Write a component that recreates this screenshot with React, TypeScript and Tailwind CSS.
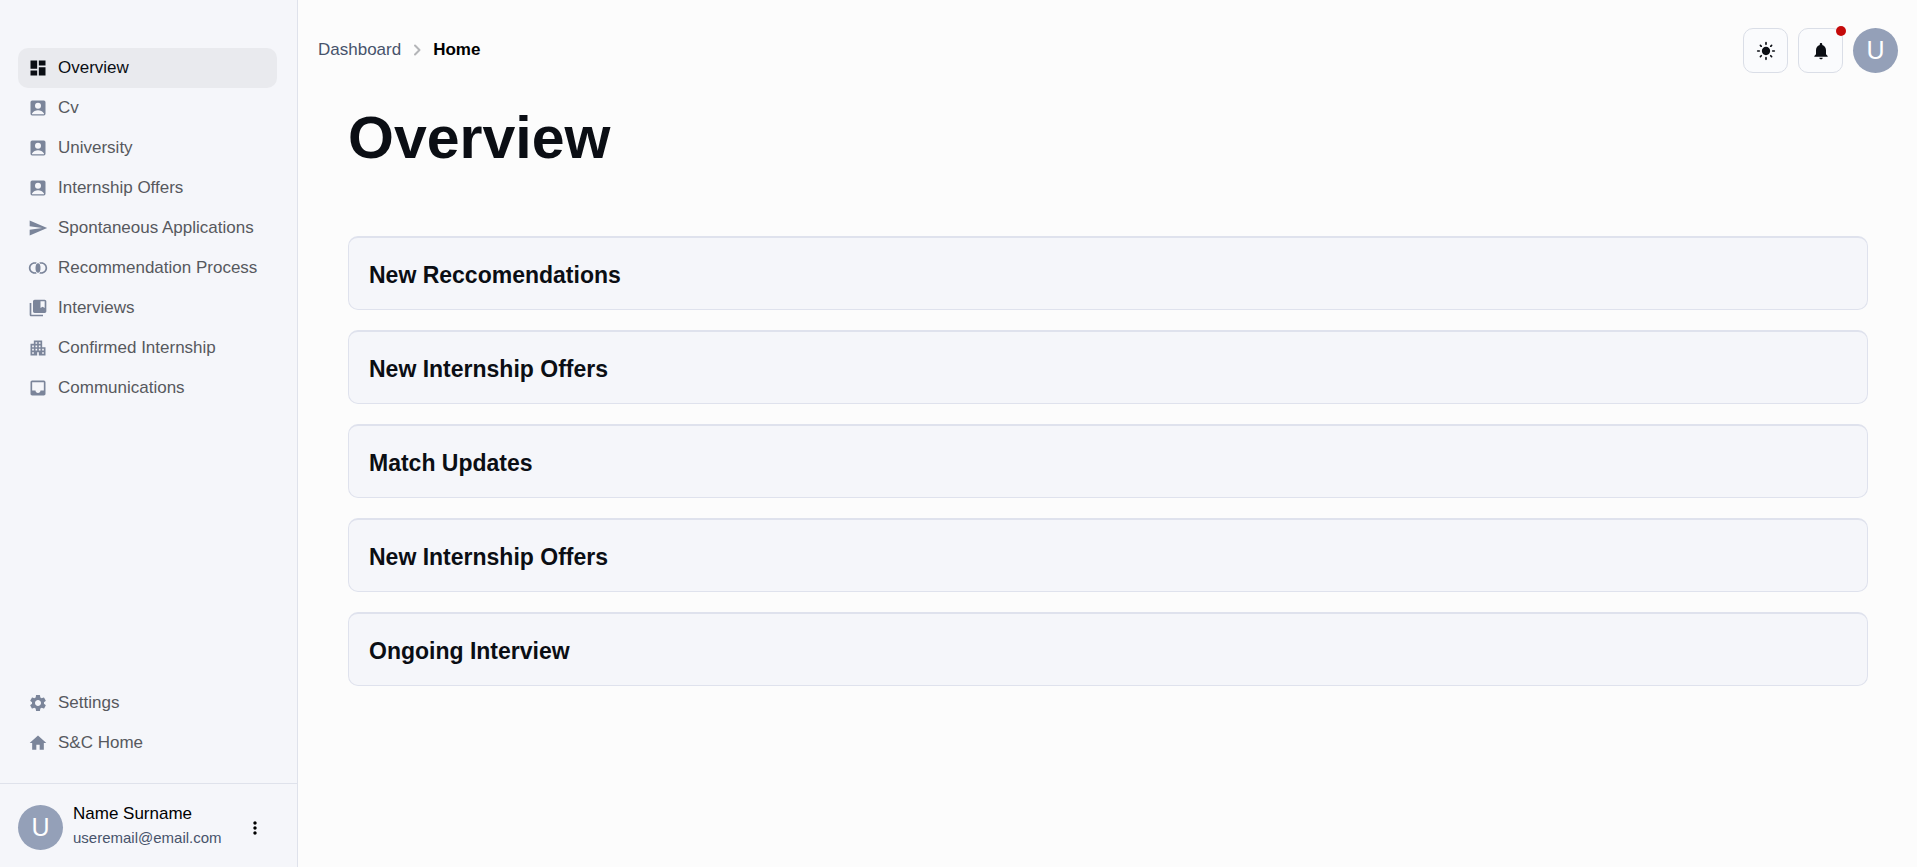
import type { ReactNode } from "react";
import type { IconType } from "react-icons";
import {
  MdApartment,
  MdCollectionsBookmark,
  MdDashboard,
  MdHome,
  MdInbox,
  MdJoinInner,
  MdLightMode,
  MdMoreVert,
  MdNotifications,
  MdSend,
  MdSettings,
} from "react-icons/md";

type NavEntry = {
  label: string;
  icon: IconType | ((props: { className?: string }) => ReactNode);
  active?: boolean;
};

function PersonBoxIcon({ className }: { className?: string }) {
  return (
    <svg viewBox="0 0 24 24" fill="currentColor" className={className} aria-hidden="true">
      <path
        fillRule="evenodd"
        d="M5 3H19A2 2 0 0 1 21 5V19A2 2 0 0 1 19 21H5A2 2 0 0 1 3 19V5A2 2 0 0 1 5 3ZM12 5.8A3.6 3.6 0 1 0 12 13A3.6 3.6 0 1 0 12 5.8ZM4.8 19.4H19.2V18.6C17.4 16 14.9 14.8 12 14.8S6.6 16 4.8 18.6Z"
      />
    </svg>
  );
}

const mainNav: NavEntry[] = [
  { label: "Overview", icon: MdDashboard, active: true },
  { label: "Cv", icon: PersonBoxIcon },
  { label: "University", icon: PersonBoxIcon },
  { label: "Internship Offers", icon: PersonBoxIcon },
  { label: "Spontaneous Applications", icon: MdSend },
  { label: "Recommendation Process", icon: MdJoinInner },
  { label: "Interviews", icon: MdCollectionsBookmark },
  { label: "Confirmed Internship", icon: MdApartment },
  { label: "Communications", icon: MdInbox },
];

const secondaryNav: NavEntry[] = [
  { label: "Settings", icon: MdSettings },
  { label: "S&C Home", icon: MdHome },
];

const panels = [
  "New Reccomendations",
  "New Internship Offers",
  "Match Updates",
  "New Internship Offers",
  "Ongoing Interview",
];

function NavList({ entries }: { entries: NavEntry[] }) {
  return (
    <ul>
      {entries.map(({ label, icon: Icon, active }) => (
        <li key={label}>
          <a
            href="#"
            aria-current={active ? "page" : undefined}
            className={
              active
                ? "flex h-10 items-center gap-2.5 rounded-[10px] bg-[#e9eaee] px-2.5 text-[#0b0e14]"
                : "flex h-10 items-center gap-2.5 rounded-[10px] px-2.5 text-[#57595e]"
            }
          >
            <Icon className={active ? "size-5 shrink-0" : "size-5 shrink-0 text-[#7b859a]"} />
            <span className="whitespace-nowrap">{label}</span>
          </a>
        </li>
      ))}
    </ul>
  );
}

function Avatar() {
  return (
    <span className="flex size-[45px] shrink-0 items-center justify-center rounded-full bg-[#94a0b8] text-[25px] text-white">
      U
    </span>
  );
}

function IconButton({ label, children }: { label: string; children: ReactNode }) {
  return (
    <button
      type="button"
      aria-label={label}
      className="flex size-[45px] items-center justify-center rounded-[10px] border border-[#dadee7] bg-[#fafbfd] text-[#0b0e14]"
    >
      {children}
    </button>
  );
}

export default function App() {
  return (
    <div className="flex min-h-screen bg-[#fcfcfc] font-['Liberation_Sans',Arial,sans-serif] text-[17px] text-[#0b0e14]">
      <aside className="flex w-[298px] shrink-0 flex-col border-r border-[#dfe2eb] bg-[#f5f6fa]">
        <nav aria-label="Main" className="flex grow flex-col justify-between pt-12 pr-5 pb-5 pl-[18px]">
          <NavList entries={mainNav} />
          <NavList entries={secondaryNav} />
        </nav>
        <div className="flex items-end gap-2.5 border-t border-[#dfe2eb] pt-4 pr-5 pb-[17px] pl-[18px]">
          <Avatar />
          <div className="grow pb-0.5">
            <p className="leading-7 text-black">Name Surname</p>
            <p className="text-[15px] leading-5 text-[#47536b]">useremail@email.com</p>
          </div>
          <button type="button" aria-label="Open menu" className="flex size-11 items-center justify-center text-black">
            <MdMoreVert className="size-5" />
          </button>
        </div>
      </aside>

      <main className="min-w-0 grow">
        <header className="flex items-center justify-between pt-7 pr-[19px] pl-5">
          <nav aria-label="Breadcrumb" className="pb-0.5">
            <ol className="flex items-center gap-3">
              <li>
                <a href="#" className="text-[#47536b]">Dashboard</a>
              </li>
              <li aria-hidden="true">
                <svg
                  viewBox="0 0 8 12"
                  fill="none"
                  stroke="currentColor"
                  strokeWidth="2"
                  strokeLinecap="round"
                  strokeLinejoin="round"
                  className="h-3 w-2 text-[#b4b5b8]"
                >
                  <path d="M2 1.5 6.5 6 2 10.5" />
                </svg>
              </li>
              <li className="font-bold text-black" aria-current="page">Home</li>
            </ol>
          </nav>
          <div className="flex items-center gap-2.5">
            <IconButton label="Toggle theme">
              <MdLightMode className="size-5" />
            </IconButton>
            <div className="relative">
              <IconButton label="Open notifications">
                <MdNotifications className="size-5" />
              </IconButton>
              <span className="absolute -top-0.5 -right-[3px] size-2.5 rounded-full bg-[#c50a0a]" />
            </div>
            <Avatar />
          </div>
        </header>

        <div className="pt-[29px] pr-[49px] pl-[50px]">
          <h1 className="text-[59px] leading-[72px] font-bold">Overview</h1>
          <div className="mt-[62px] flex flex-col gap-5">
            {panels.map((title, index) => (
              <section
                key={index}
                className="rounded-[10px] border border-t-2 border-[#dfe2ed] bg-[#f5f6fa] px-5 pt-[22px] pb-[18px]"
              >
                <h2 className="text-[23px] leading-[31px] font-bold">{title}</h2>
              </section>
            ))}
          </div>
        </div>
      </main>
    </div>
  );
}
